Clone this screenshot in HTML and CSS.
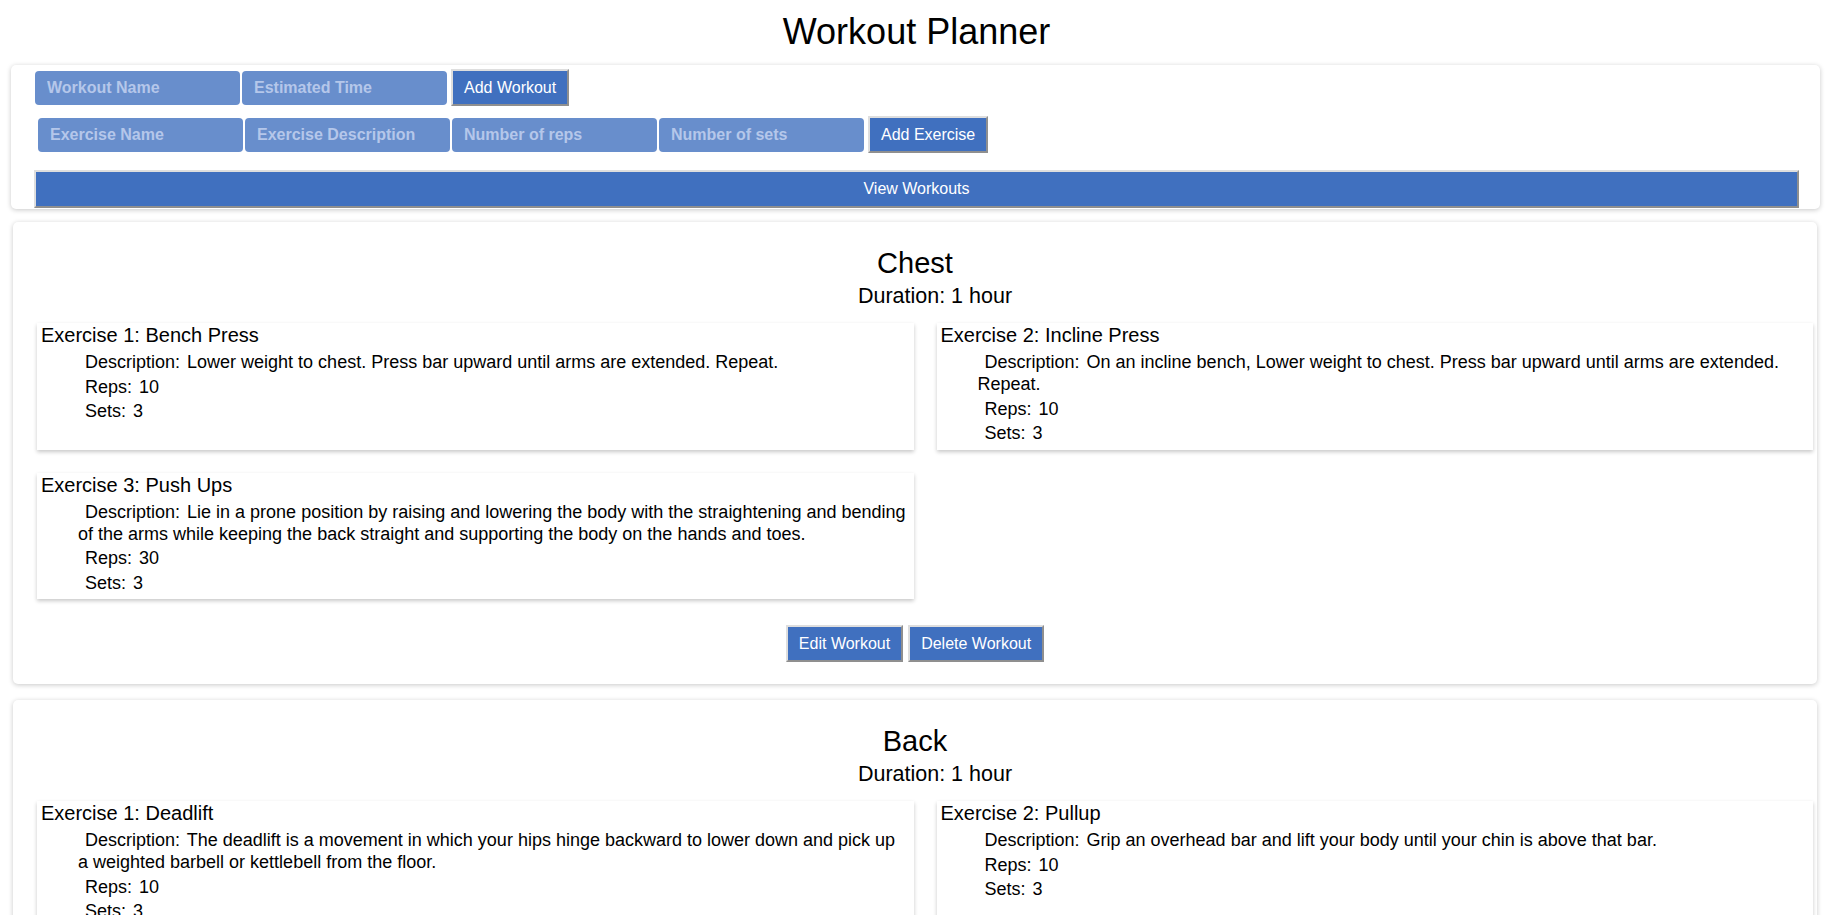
FILE: index.html
```html
<!DOCTYPE html>
<html lang="en">
<head>
<meta charset="utf-8">
<title>Workout Planner</title>
<link rel="stylesheet" href="styles.css">
</head>
<body>
<h1 class="title">Workout Planner</h1>
<div class="panel">
  <div class="row row-workout">
    <input class="field" type="text" placeholder="Workout Name">
    <input class="field" type="text" placeholder="Estimated Time">
    <button class="btn">Add Workout</button>
  </div>
  <div class="row row-exercise">
    <input class="field" type="text" placeholder="Exercise Name">
    <input class="field" type="text" placeholder="Exercise Description">
    <input class="field" type="text" placeholder="Number of reps">
    <input class="field" type="text" placeholder="Number of sets">
    <button class="btn">Add Exercise</button>
  </div>
  <button class="btn btn-wide">View Workouts</button>
</div>

<div class="workout">
  <h2 class="workout-name">Chest</h2>
  <h3 class="workout-duration">Duration: 1 hour</h3>
  <div class="exercises">
    <div class="exercise">
      <div class="ex-title">Exercise 1: Bench Press</div>
      <div class="ex-line"><span class="lbl">Description:</span> Lower weight to chest. Press bar upward until arms are extended. Repeat.</div>
      <div class="ex-line"><span class="lbl">Reps:</span> 10</div>
      <div class="ex-line"><span class="lbl">Sets:</span> 3</div>
    </div>
    <div class="exercise">
      <div class="ex-title">Exercise 2: Incline Press</div>
      <div class="ex-line"><span class="lbl">Description:</span> On an incline bench, Lower weight to chest. Press bar upward until arms are extended. Repeat.</div>
      <div class="ex-line"><span class="lbl">Reps:</span> 10</div>
      <div class="ex-line"><span class="lbl">Sets:</span> 3</div>
    </div>
    <div class="exercise">
      <div class="ex-title">Exercise 3: Push Ups</div>
      <div class="ex-line"><span class="lbl">Description:</span> Lie in a prone position by raising and lowering the body with the straightening and bending of the arms while keeping the back straight and supporting the body on the hands and toes.</div>
      <div class="ex-line"><span class="lbl">Reps:</span> 30</div>
      <div class="ex-line"><span class="lbl">Sets:</span> 3</div>
    </div>
  </div>
  <div class="actions">
    <button class="btn">Edit Workout</button>
    <button class="btn">Delete Workout</button>
  </div>
</div>

<div class="workout">
  <h2 class="workout-name">Back</h2>
  <h3 class="workout-duration">Duration: 1 hour</h3>
  <div class="exercises">
    <div class="exercise">
      <div class="ex-title">Exercise 1: Deadlift</div>
      <div class="ex-line"><span class="lbl">Description:</span> The deadlift is a movement in which your hips hinge backward to lower down and pick up a weighted barbell or kettlebell from the floor.</div>
      <div class="ex-line"><span class="lbl">Reps:</span> 10</div>
      <div class="ex-line"><span class="lbl">Sets:</span> 3</div>
    </div>
    <div class="exercise">
      <div class="ex-title">Exercise 2: Pullup</div>
      <div class="ex-line"><span class="lbl">Description:</span> Grip an overhead bar and lift your body until your chin is above that bar.</div>
      <div class="ex-line"><span class="lbl">Reps:</span> 10</div>
      <div class="ex-line"><span class="lbl">Sets:</span> 3</div>
    </div>
  </div>
  <div class="actions">
    <button class="btn">Edit Workout</button>
    <button class="btn">Delete Workout</button>
  </div>
</div>
</body>
</html>
```

FILE: styles.css
```css
* { box-sizing: border-box; }

body {
  margin: 0;
  background: #ffffff;
  color: #000000;
  font-family: "Liberation Sans", Arial, sans-serif;
}

.title {
  margin: 11px 0 12px;
  font-size: 36px;
  font-weight: normal;
  text-align: center;
}

.panel {
  display: flex;
  flex-direction: column;
  margin: 0 13px 13px 11px;
  padding: 4px 21px 1px 23px;
  background: #fff;
  border-radius: 5px;
  box-shadow: 0 1px 5px rgba(0, 0, 0, 0.22);
}

.row {
  display: flex;
  align-items: center;
  gap: 2px;
}

.row-workout { margin-left: 1px; }
.row-exercise { margin-left: 4px; margin-top: 10px; }

.field {
  width: 205px;
  height: 34px;
  padding: 0 12px;
  border: none;
  border-radius: 4px;
  background: #688ecc;
  color: #fff;
  font-family: "Liberation Sans", Arial, sans-serif;
  font-size: 16px;
  font-weight: bold;
  outline: none;
}

.field::placeholder {
  color: #b5c7ea;
  opacity: 1;
}

.btn {
  height: 37px;
  padding: 0 11px;
  border-width: 2px;
  border-style: solid;
  border-color: #dedede #8f8f8f #8f8f8f #dedede;
  background: #4070bf;
  color: #fff;
  font-family: "Liberation Sans", Arial, sans-serif;
  font-size: 16px;
}

.row .btn { margin-left: 2px; }

.btn-wide {
  align-self: stretch;
  height: 38px;
  margin-top: 17px;
}

.workout {
  margin: 0 16px 16px 13px;
  padding: 25px 4px 22px 24px;
  background: #fff;
  border-radius: 5px;
  box-shadow: 0 1px 5px rgba(0, 0, 0, 0.22);
}

.workout-name {
  margin: 0 0 0 -20px;
  font-size: 29px;
  font-weight: normal;
  text-align: center;
}

.workout-duration {
  margin: 4px 0 0 20px;
  font-size: 21.5px;
  font-weight: normal;
  text-align: center;
}

.exercises {
  display: grid;
  grid-template-columns: 1fr 1fr;
  column-gap: 23px;
  row-gap: 23px;
  margin-top: 14px;
}

.exercise {
  padding: 1px 7px 3px 4px;
  background: #fff;
  box-shadow: 0 2px 4px rgba(0, 0, 0, 0.22);
}

.ex-title {
  font-size: 20px;
  line-height: 23px;
  margin-bottom: 4px;
}

.ex-line {
  font-size: 18px;
  line-height: 22px;
  margin-bottom: 2.5px;
  padding-left: 37px;
  text-indent: 7px;
}

.lbl { margin-right: 2px; }

.actions {
  display: flex;
  justify-content: center;
  gap: 5px;
  margin-top: 26px;
  margin-left: -20px;
}
```
